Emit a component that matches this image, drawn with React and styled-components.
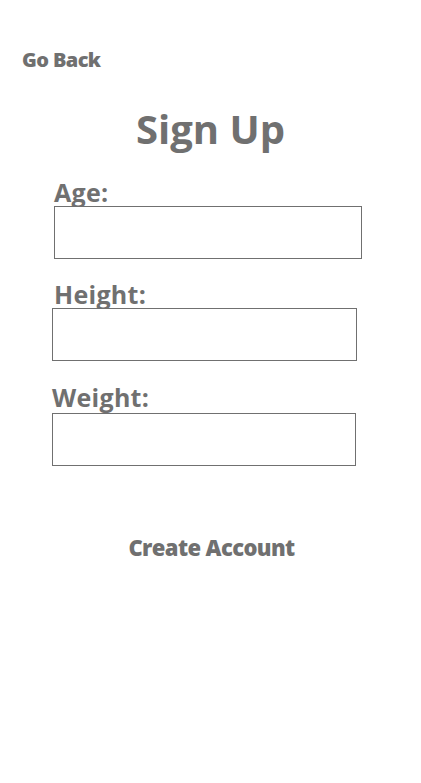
import React from 'react';
import styled, { createGlobalStyle } from 'styled-components';

const GlobalStyle = createGlobalStyle`
  html, body {
    margin: 0;
    padding: 0;
    background: #ffffff;
  }
  body {
    font-family: "Open Sans", "Noto Sans", sans-serif;
    color: #707070;
  }
`;

const Screen = styled.div`
  width: 421px;
  min-height: 783px;
  display: flex;
  flex-direction: column;
  box-sizing: border-box;
  padding-top: 46px;
`;

const BackLink = styled.a`
  align-self: flex-start;
  margin-left: 22px;
  font-size: 20px;
  font-weight: 800;
  letter-spacing: -0.6px;
  line-height: 28px;
  color: #707070;
  cursor: pointer;
`;

const Title = styled.h1`
  margin: 28px 0 0;
  text-align: center;
  font-size: 40px;
  font-weight: 700;
  line-height: 54px;
  color: #707070;
`;

const Form = styled.form`
  display: flex;
  flex-direction: column;
  margin-top: 22px;
`;

const Field = styled.div`
  display: flex;
  flex-direction: column;
  margin-left: ${(p) => p.$left}px;
  margin-top: ${(p) => p.$top}px;
`;

const Label = styled.label`
  padding-left: ${(p) => p.$indent || 0}px;
  font-size: 25px;
  font-weight: 700;
  letter-spacing: 0.3px;
  line-height: 28px;
  color: #707070;
`;

const Input = styled.input`
  box-sizing: border-box;
  width: ${(p) => p.$width}px;
  height: 53px;
  margin-top: ${(p) => p.$gap}px;
  border: 1px solid #707070;
  border-radius: 0;
  background: #ffffff;
  outline: none;
  font-family: inherit;
  font-size: 18px;
  padding: 0 10px;
`;

const SubmitButton = styled.button`
  align-self: center;
  margin-top: 66px;
  margin-left: 2px;
  padding: 0;
  border: none;
  background: none;
  font-family: inherit;
  font-size: 22px;
  font-weight: 800;
  letter-spacing: -0.6px;
  line-height: 30px;
  color: #707070;
  cursor: pointer;
`;

const fields = [
  { id: 'age', label: 'Age:', left: 54, top: 0, width: 308, gap: 0, indent: 0 },
  { id: 'height', label: 'Height:', left: 52, top: 21, width: 305, gap: 0, indent: 2 },
  { id: 'weight', label: 'Weight:', left: 52, top: 22, width: 304, gap: 2, indent: 0 },
];

const App = () => (
  <>
    <GlobalStyle />
    <Screen>
      <BackLink>Go Back</BackLink>
      <Title>Sign Up</Title>
      <Form onSubmit={(e) => e.preventDefault()}>
        {fields.map((f) => (
          <Field key={f.id} $left={f.left} $top={f.top}>
            <Label htmlFor={f.id} $indent={f.indent}>{f.label}</Label>
            <Input id={f.id} type="text" $width={f.width} $gap={f.gap} />
          </Field>
        ))}
        <SubmitButton type="submit">Create Account</SubmitButton>
      </Form>
    </Screen>
  </>
);

export default App;
